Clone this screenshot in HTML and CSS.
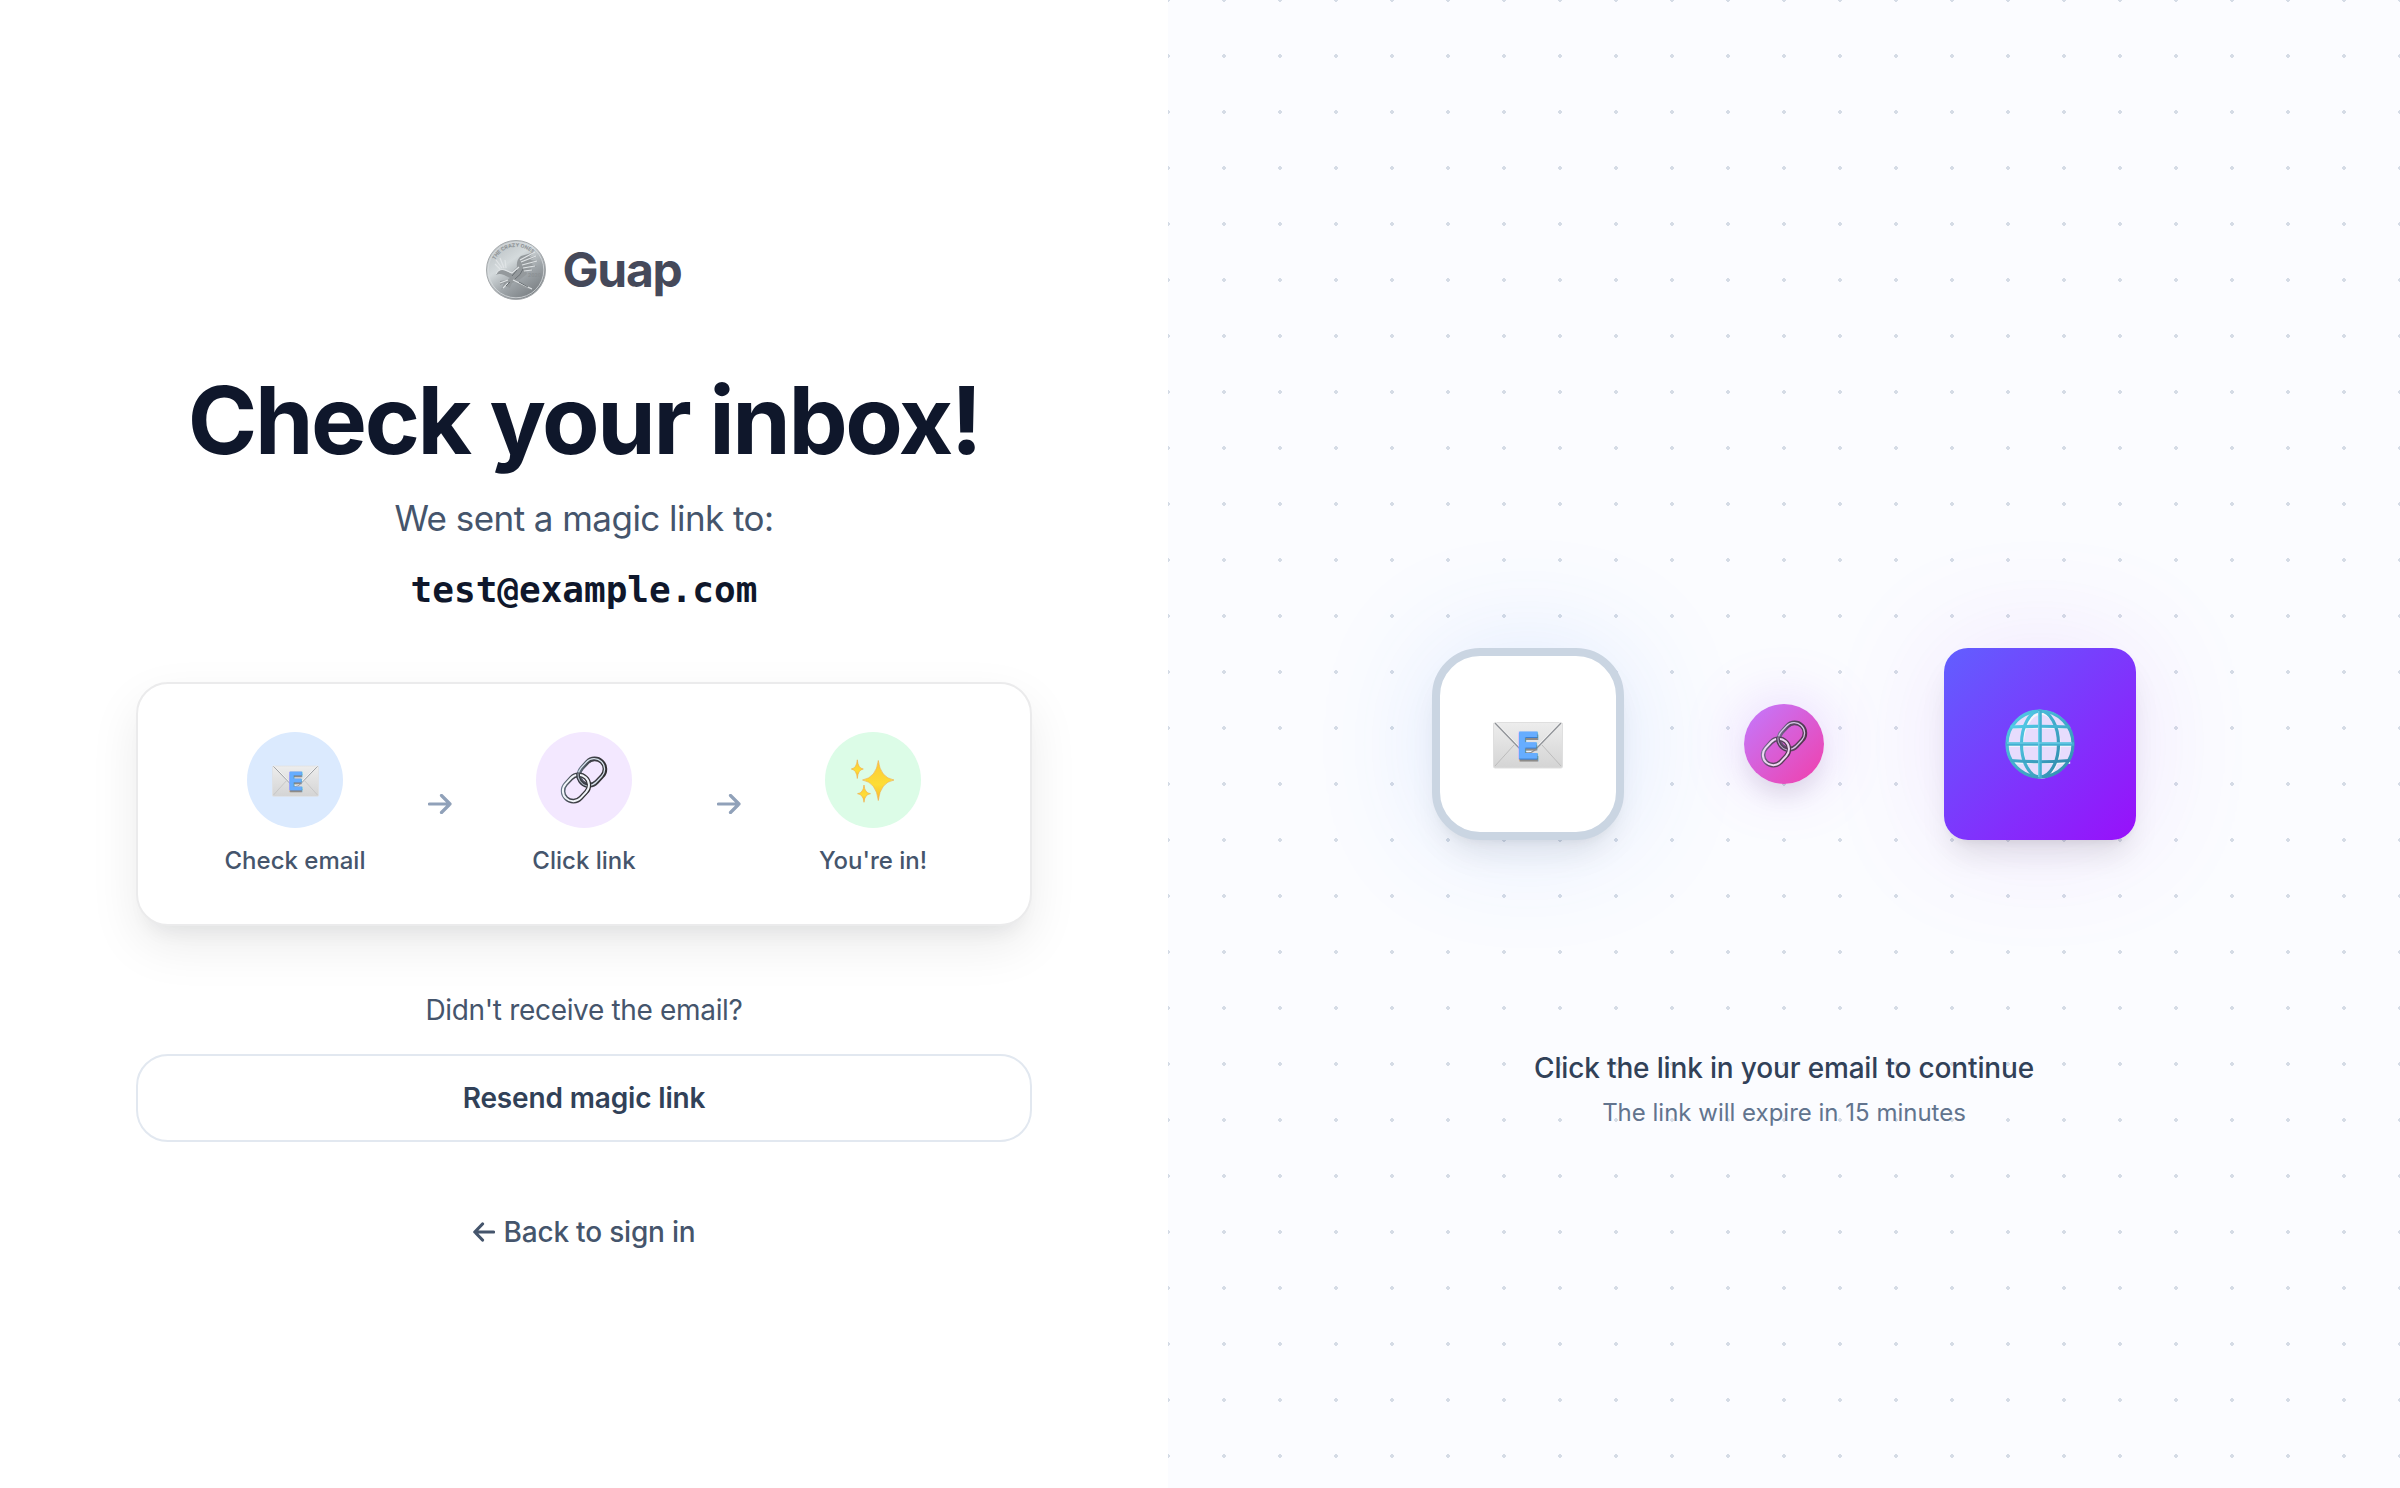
FILE: index.html
```html
<!DOCTYPE html>
<html lang="en">
<head>
<meta charset="utf-8">
<title>Guap</title>
<link rel="stylesheet" href="styles.css">
</head>
<body>
<svg class="defs" width="0" height="0" aria-hidden="true">
  <defs>
    <linearGradient id="paper" x1="0" y1="0" x2="0" y2="1"><stop offset="0" stop-color="#ededed"/><stop offset="1" stop-color="#d4d4d4"/></linearGradient>
    <linearGradient id="steel" x1="0" y1="0" x2="1" y2="1"><stop offset="0" stop-color="#6f8296"/><stop offset=".35" stop-color="#42464e"/><stop offset="1" stop-color="#2e2b2d"/></linearGradient>
    <linearGradient id="gold" x1="0" y1="0" x2="0" y2="1"><stop offset="0" stop-color="#fcc934"/><stop offset=".6" stop-color="#fddd36"/><stop offset="1" stop-color="#f9b82c"/></linearGradient>
    <linearGradient id="grid" x1="0" y1="0" x2="1" y2="1"><stop offset="0" stop-color="#53cdea"/><stop offset="1" stop-color="#318bad"/></linearGradient>
    <linearGradient id="silver" x1=".1" y1="0" x2=".8" y2="1"><stop offset="0" stop-color="#b5bbbe"/><stop offset=".38" stop-color="#d4dadc"/><stop offset=".65" stop-color="#9fa5a9"/><stop offset="1" stop-color="#74797d"/></linearGradient>
    <symbol id="mail" viewBox="0 0 70 48">
      <rect x=".5" y="1.500" width="69" height="45.500" rx="1.6" fill="url(#paper)" stroke="#dfdfdf"/>
      <path d="M2 45 21 24M68 45 49 24" stroke="#bcbcbc" stroke-width="1" fill="none"/>
      <path d="M2 2 28 29Q35 35 42 29L68 2" stroke="#f7f7f7" stroke-width="1.6" fill="none" transform="translate(0 -1)"/>
      <path d="M2 2 28 29Q35 35 42 29L68 2" stroke="#8f9297" stroke-width="1.3" fill="none"/>
      <text x="35.6" y="40" class="mail-shade">E</text>
      <text x="35" y="38" class="mail-edge">E</text>
      <text x="35" y="37" class="mail-letter">E</text>
    </symbol>
    <symbol id="chain" viewBox="0 0 48 48">
      <g fill="none">
        <g transform="rotate(-47 32 16)"><rect x="17.800" y="5.800" width="28.400" height="20.400" rx="10.200" stroke="url(#steel)" stroke-width="4.600"/><rect x="17.200" y="5.200" width="28.800" height="20.800" rx="10.400" stroke="#d7e2ec" stroke-width="1.300"/></g>
        <g transform="rotate(-47 16 32)"><rect x="1.800" y="21.800" width="28.400" height="20.400" rx="10.200" stroke="url(#steel)" stroke-width="4.600"/><rect x="1.700" y="21.600" width="28.600" height="20.600" rx="10.300" stroke="#f2f6fa" stroke-width="2"/></g>
        <path d="M18 17.500C17.500 23 21 28.500 27 30" stroke="#353840" stroke-width="3.800"/>
        <path d="M18 17.500C17.500 23 21 28.500 27 30" stroke="#aeb8c2" stroke-width="1.100"/>
      </g>
    </symbol>
    <symbol id="sparkles" viewBox="0 0 44 44">
      <g fill="url(#gold)" stroke="#f5a742" stroke-width=".6" stroke-linejoin="round">
        <path d="M27.300 1.500Q29.300 18.500 43 21Q29.300 23.500 27.300 41.500Q25.300 23.500 11.500 21Q25.300 18.500 27.300 1.500Z"/>
        <path d="M6.300.8Q7 9.200 12.300 10Q7 10.800 6.300 19.500Q5.600 10.800.3 10Q5.600 9.200 6.300.8Z"/>
        <path d="M13 26Q13.700 34 19.500 34.700Q13.700 35.500 13 43.300Q12.300 35.500 6.500 34.700Q12.300 34 13 26Z"/>
      </g>
    </symbol>
    <symbol id="globe" viewBox="0 0 70 70">
      <circle cx="35" cy="35" r="34" fill="#e7dcfd"/>
      <g fill="none" stroke="#f4f8fb" stroke-width="2" transform="translate(1.200 1.800)"><path d="M6 17H64M2 35H67M6 52H64"/><ellipse cx="35" cy="35" rx="18.500" ry="32"/></g>
      <g fill="none" stroke="url(#grid)" stroke-width="3.200">
        <circle cx="35" cy="35" r="33"/>
        <ellipse cx="35" cy="35" rx="18.500" ry="33"/>
        <path d="M5.500 18Q35 16.500 64.500 18M5.500 51.500Q35 54 64.500 51.500"/>
      </g>
      <path d="M35 1V69M1 35H69" stroke="#43afd0" stroke-width="3.600"/>
      <path d="M33.800 2V68M2 34H67" stroke="#74d9ef" stroke-width="1"/>
    </symbol>
  </defs>
</svg>
<div class="page">
  <main class="panel">
    <div class="brand">
      <svg class="coin" viewBox="0 0 60 60" aria-hidden="true">
        <circle cx="30" cy="30" r="29.500" fill="url(#silver)" stroke="#a4a8ab"/>
        <circle cx="30" cy="30" r="27.800" fill="none" stroke="#d9dddf" stroke-width=".8"/>
        <path id="rim" d="M9 20A23.500 23.500 0 0 1 49 16.500" fill="none"/>
        <text class="coin-text"><textPath href="#rim">THE CRAZY ONES</textPath></text>
        <text class="coin-text" x="42" y="37">2020</text>
        <path d="M10 35Q12 29 18 30L25 33 31 27Q30 20 35 16L49 12 43 17 51 16 44 20 52 21 45 24 51 27 44 27 47 31 40 30 41 34 36 38 32 41 47 50 35 47 29 42 26 43 24 48 19 46 15 50 18 43 14 45 14 41 21 40 24 38 18 35Q13 33 10 35Z" fill="#94999c"/>
        <path d="M10 34Q13 28 19 30L26 33 33 27M34 20 49 12M35 22 50 16M36 25 51 21M37 28 49 26M38 31 46 30M27 40 46 49M14 43 22 40M17 48 22 43M16 28 10 20M18 28 14 18M20 28 19 20M14 29 9 24" fill="none" stroke="#e0e4e6" stroke-width="1.200"/>
        <path d="M29 39Q35 35 37 29M26 36 31 30M24 42 20 46M33 42 42 47" fill="none" stroke="#6a7074" stroke-width="1"/>
      </svg>
      <span class="brand-name">Guap</span>
    </div>
    <h1 class="title">Check your inbox!</h1>
    <p class="lead">We sent a magic link to:</p>
    <p class="address">test@example.com</p>
    <section class="steps">
      <div class="step">
        <div class="bubble blue"><svg width="47" height="32"><use href="#mail"/></svg></div>
        <span class="step-label">Check email</span>
      </div>
      <svg class="arrow" viewBox="0 0 24 20"><path d="M1.500 10H22M13.500 1.500 22 10 13.500 18.500"/></svg>
      <div class="step">
        <div class="bubble purple"><svg width="48" height="48"><use href="#chain"/></svg></div>
        <span class="step-label">Click link</span>
      </div>
      <svg class="arrow" viewBox="0 0 24 20"><path d="M1.500 10H22M13.500 1.500 22 10 13.500 18.500"/></svg>
      <div class="step">
        <div class="bubble green"><svg width="44" height="44"><use href="#sparkles"/></svg></div>
        <span class="step-label">You're in!</span>
      </div>
    </section>
    <p class="question">Didn't receive the email?</p>
    <button class="resend" type="button">Resend magic link</button>
    <a class="back"><svg class="back-arrow" viewBox="0 0 22 20"><path d="M20.500 10H2M9.500 2 1.800 10 9.500 18"/></svg><span>Back to sign in</span></a>
  </main>
  <aside class="visual">
    <div class="flow">
      <div class="tile inbox"><svg width="70" height="48"><use href="#mail"/></svg></div>
      <div class="connector"><svg width="48" height="48"><use href="#chain"/></svg></div>
      <div class="tile web"><svg width="70" height="70"><use href="#globe"/></svg></div>
    </div>
    <p class="hint">Click the link in your email to continue</p>
    <p class="expiry">The link will expire in 15 minutes</p>
  </aside>
</div>
</body>
</html>
```
FILE: styles.css
```css
* { box-sizing: border-box; }
body {
  margin: 0;
  font-family: Inter, "Liberation Sans", sans-serif;
  background: #fff;
  color: #45556c;
}
p, h1 { margin: 0; white-space: nowrap; }
svg { display: block; flex: none; }
.defs { position: absolute; }
.page { display: flex; height: 1488px; overflow: hidden; }

.panel {
  width: 1168px;
  padding: 238px 136px 0;
  display: flex;
  flex-direction: column;
  align-items: center;
}
.brand { display: flex; align-items: center; gap: 16px; height: 64px; }
.coin { width: 60px; height: 60px; }
.coin-text { font-size: 5px; font-weight: 700; fill: #8b9093; }
.brand-name { font-size: 48px; line-height: 64px; font-weight: 700; letter-spacing: -1.2px; color: #45495a; }
.title { margin-top: 70px; font-size: 94px; line-height: 96px; font-weight: 700; letter-spacing: -2.4px; color: #0f172b; }
.lead { margin-top: 22px; font-size: 35px; line-height: 56px; letter-spacing: -.55px; }
.address { margin-top: 16px; font: 700 36px/56px "DejaVu Sans Mono", monospace; color: #0f172b; }

.steps {
  margin-top: 64px;
  width: 100%;
  height: 244px;
  flex: none;
  padding-top: 48px;
  display: flex;
  justify-content: center;
  border: 2px solid #ebebec;
  border-radius: 32px;
  background: #fff;
  box-shadow: 0 20px 50px rgba(0, 0, 0, .08), 0 16px 20px -12px rgba(20, 25, 45, .07);
}
.step { width: 192px; display: flex; flex-direction: column; align-items: center; gap: 17px; }
.bubble { width: 96px; height: 96px; border-radius: 50%; display: flex; align-items: center; justify-content: center; }
.blue { background: #dbeafe; }
.blue svg { margin-top: 1px; }
.purple { background: #f3e8ff; }
.green { background: #dcfce7; }
.green svg { margin-top: 2px; }
.step-label { font-size: 24px; line-height: 32px; font-weight: 500; white-space: nowrap; }
.arrow { width: 24px; height: 20px; margin: 62px 36.5px 0; }
.arrow path, .back-arrow path { fill: none; stroke: #90a1b9; stroke-width: 3.2; stroke-linecap: round; stroke-linejoin: round; }
.question { margin-top: 64px; font-size: 28px; line-height: 40px; letter-spacing: -.33px; }
.resend {
  margin-top: 24px;
  width: 100%;
  height: 88px;
  flex: none;
  border: 2px solid #e2e8f0;
  border-radius: 32px;
  background: #fff;
  font: 600 28px/40px Inter, sans-serif;
  letter-spacing: -.15px;
  color: #314158;
}
.back { margin-top: 70px; display: flex; align-items: center; gap: 9px; font-size: 28px; line-height: 40px; font-weight: 500; letter-spacing: -.2px; white-space: nowrap; }
.back-arrow { width: 22px; height: 20px; }
.back-arrow path { stroke: #45556c; }

.visual {
  flex: 1;
  padding-top: 648px;
  display: flex;
  flex-direction: column;
  align-items: center;
  background: radial-gradient(circle at 2px 2px, #d5dce6 2px, transparent 2px) -2px -2px / 56px 56px, #fbfcff;
}
.flow { display: flex; align-items: center; gap: 120px; }
.tile { width: 192px; height: 192px; display: flex; align-items: center; justify-content: center; }
.inbox {
  border: 8px solid #cad5e2;
  border-radius: 48px;
  background: #fff;
  box-shadow: 0 0 120px rgba(59, 130, 246, .15), 0 20px 30px -6px rgba(0, 0, 0, .08), 0 8px 12px -8px rgba(0, 0, 0, .08);
}
.inbox svg { margin-top: 1px; }
.connector {
  width: 80px;
  height: 80px;
  border-radius: 50%;
  display: flex;
  align-items: center;
  justify-content: center;
  background: linear-gradient(135deg, #c27aff, #f13fab);
  box-shadow: 0 0 60px rgba(168, 85, 247, .26), 0 16px 24px -6px rgba(0, 0, 0, .1);
}
.connector svg { opacity: .8; }
.web {
  border-radius: 24px;
  background: linear-gradient(135deg, #615fff, #9810fa);
  box-shadow: 0 0 120px rgba(168, 85, 247, .14), 0 20px 30px -6px rgba(0, 0, 0, .1), 0 8px 12px -8px rgba(0, 0, 0, .1);
}
.mail-letter, .mail-edge, .mail-shade { font: 700 36px Inter, sans-serif; text-anchor: middle; stroke-width: 1px; }
.mail-letter { fill: #66adff; stroke: #66adff; }
.mail-edge { fill: #387fd4; stroke: #387fd4; }
.mail-shade { fill: #8d8b88; stroke: #8d8b88; }
.hint { margin-top: 208px; font-size: 28px; line-height: 40px; font-weight: 500; letter-spacing: -.16px; color: #314158; }
.expiry { margin-top: 9px; font-size: 24px; line-height: 32px; color: #62748e; }
```
